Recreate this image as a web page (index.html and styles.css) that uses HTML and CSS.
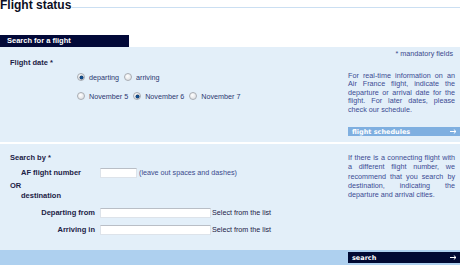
FILE: index.html
```html
<!DOCTYPE html>
<html lang="en">

<head>
    <meta charset="UTF-8">
    <meta name="viewport" content="width=device-width, initial-scale=1.0">
    <title>Flight status</title>
    <link rel="stylesheet" href="styles.css">
</head>

<body>
    <div class="title-bar">
        <h1>Flight status</h1>
        <div class="rule"></div>
    </div>

    <div class="tab">Search for a flight</div>

    <div class="panel">
        <!-- Flight date -->
        <div class="section date-section">
            <div class="mandatory">* mandatory fields</div>
            <div class="cols">
                <div class="main">
                    <div class="field-title">Flight date *</div>
                    <div class="radio-row first">
                        <span class="radio checked"></span><span class="radio-label">departing</span>
                        <span class="radio"></span><span class="radio-label">arriving</span>
                    </div>
                    <div class="radio-row second">
                        <span class="radio"></span><span class="radio-label">November 5</span>
                        <span class="radio checked"></span><span class="radio-label">November 6</span>
                        <span class="radio"></span><span class="radio-label">November 7</span>
                    </div>
                </div>
                <div class="aside">
                    <p class="info info-date">For real-time information on an Air France flight, indicate the departure or arrival date for the flight. For later dates, please check our schedule.</p>
                    <div class="link-bar light">
                        <span>flight schedules</span>
                        <svg width="7" height="5" viewBox="0 0 7 5"><path d="M0 2.5H6M3.8 0.5L6 2.5L3.8 4.5" stroke="#fff" stroke-width="1" fill="none"/></svg>
                    </div>
                </div>
            </div>
        </div>

        <!-- Search by -->
        <div class="section search-section">
            <div class="cols">
                <div class="main">
                    <div class="field-title">Search by *</div>
                    <div class="form-row af-row">
                        <label class="left-label">AF flight number</label>
                        <span class="text-input short"></span>
                        <span class="hint">(leave out spaces and dashes)</span>
                    </div>
                    <div class="field-title or">OR</div>
                    <div class="sub-title">destination</div>
                    <div class="form-row city-row">
                        <label class="right-label">Departing from</label>
                        <span class="text-input long"></span>
                        <span class="select-hint">Select from the list</span>
                    </div>
                    <div class="form-row city-row arrive">
                        <label class="right-label">Arriving in</label>
                        <span class="text-input long"></span>
                        <span class="select-hint">Select from the list</span>
                    </div>
                </div>
                <div class="aside">
                    <p class="info info-search">If there is a connecting flight with a different flight number, we recommend that you search by destination, indicating the departure and arrival cities.</p>
                </div>
            </div>
        </div>

        <div class="footer">
            <div class="link-bar dark">
                <span>search</span>
                <svg width="7" height="5" viewBox="0 0 7 5"><path d="M0 2.5H6M3.8 0.5L6 2.5L3.8 4.5" stroke="#fff" stroke-width="1" fill="none"/></svg>
            </div>
        </div>
    </div>
</body>

</html>
```

FILE: styles.css
```css
body {
    font-family: "Liberation Sans", Arial, sans-serif;
    font-size: 7.2px;
    margin: 0;
    padding: 0;
    background-color: #fff;
    color: #1c2145;
    width: 460px;
    overflow: hidden;
}

.title-bar {
    display: flex;
    height: 11px;
}

h1 {
    font-size: 12px;
    line-height: 11px;
    margin: 0;
    color: #0c0f24;
}

.rule {
    flex: 1;
    height: 7px;
    border-bottom: 1px solid #cbdff2;
    margin-left: 1px;
}

.tab {
    margin-top: 24px;
    width: 122px;
    height: 12px;
    line-height: 12px;
    padding-left: 7px;
    background-color: #020938;
    color: #fff;
    font-weight: bold;
    font-size: 7.5px;
}

.panel {
    background-color: #e3eff9;
}

.section {
    box-sizing: border-box;
}

.date-section {
    height: 97px;
    padding-top: 3px;
    border-bottom: 2px solid #fff;
}

.search-section {
    height: 106px;
    padding-top: 9px;
}

.mandatory {
    text-align: right;
    padding-right: 7px;
    line-height: 8px;
    color: #3b4a8c;
}

.cols {
    display: flex;
}

.main {
    flex: 1;
}

.aside {
    width: 112px;
}

.field-title {
    font-weight: bold;
    font-size: 7.5px;
    line-height: 9px;
    padding-left: 10px;
}

.sub-title {
    font-weight: bold;
    font-size: 7.5px;
    line-height: 9px;
    padding-left: 21px;
    margin-top: 1px;
}

.radio-row {
    display: flex;
    align-items: center;
    height: 10px;
    padding-left: 77px;
}

.radio-row.first {
    margin-top: 5px;
}

.radio-row.second {
    margin-top: 9px;
}

.radio {
    box-sizing: border-box;
    width: 8px;
    height: 8px;
    border-radius: 50%;
    border: 1px solid #a9adb3;
    background: radial-gradient(circle at 40% 35%, #ffffff, #d6d8dc);
    position: relative;
    flex-shrink: 0;
}

.radio.checked::after {
    content: "";
    position: absolute;
    left: 1.5px;
    top: 1.5px;
    width: 3px;
    height: 3px;
    border-radius: 50%;
    background-color: #0d4f94;
    box-shadow: 0 0 0 0.5px #233a5c;
}

.radio-label {
    margin-left: 4px;
    margin-right: 5px;
    color: #2b3770;
}

.info {
    margin: 0;
    padding-right: 5px;
    text-align: justify;
    color: #3b4b93;
}

.info-date {
    margin-top: 14px;
    line-height: 8.4px;
}

.info-search {
    line-height: 9.3px;
    margin-top: 0;
}

.link-bar {
    display: flex;
    justify-content: space-between;
    align-items: center;
    height: 9px;
    padding: 0 3px 0 4px;
    font-family: "DejaVu Sans", Verdana, sans-serif;
    font-weight: bold;
    font-size: 6.5px;
    color: #fff;
}

.link-bar.light {
    margin-top: 13px;
    background-color: #7fafe0;
}

.link-bar.dark {
    background-color: #010933;
    height: 11px;
}

.form-row {
    display: flex;
    align-items: center;
    height: 11px;
}

.af-row {
    margin-top: 5px;
}

.or {
    margin-top: 3px;
}

.city-row {
    margin-top: 7px;
}

.city-row.arrive {
    margin-top: 6px;
}

.left-label,
.right-label {
    box-sizing: border-box;
    width: 100px;
    font-weight: bold;
    font-size: 7.5px;
}

.left-label {
    padding-left: 21px;
}

.right-label {
    text-align: right;
    padding-right: 5px;
}

.text-input {
    box-sizing: border-box;
    height: 10px;
    background-color: #fff;
    border: 1px solid #dde3ea;
    border-top-color: #b9bec6;
}

.text-input.short {
    width: 37px;
}

.text-input.long {
    width: 111px;
}

.hint {
    margin-left: 2px;
    color: #3b4a8c;
}

.select-hint {
    margin-left: 1px;
    color: #1c2145;
}

.footer {
    display: flex;
    justify-content: flex-end;
    align-items: flex-start;
    height: 15px;
    padding-top: 2px;
    box-sizing: border-box;
    background-color: #aed0ef;
}

.footer .link-bar {
    width: 112px;
    box-sizing: border-box;
}
```
